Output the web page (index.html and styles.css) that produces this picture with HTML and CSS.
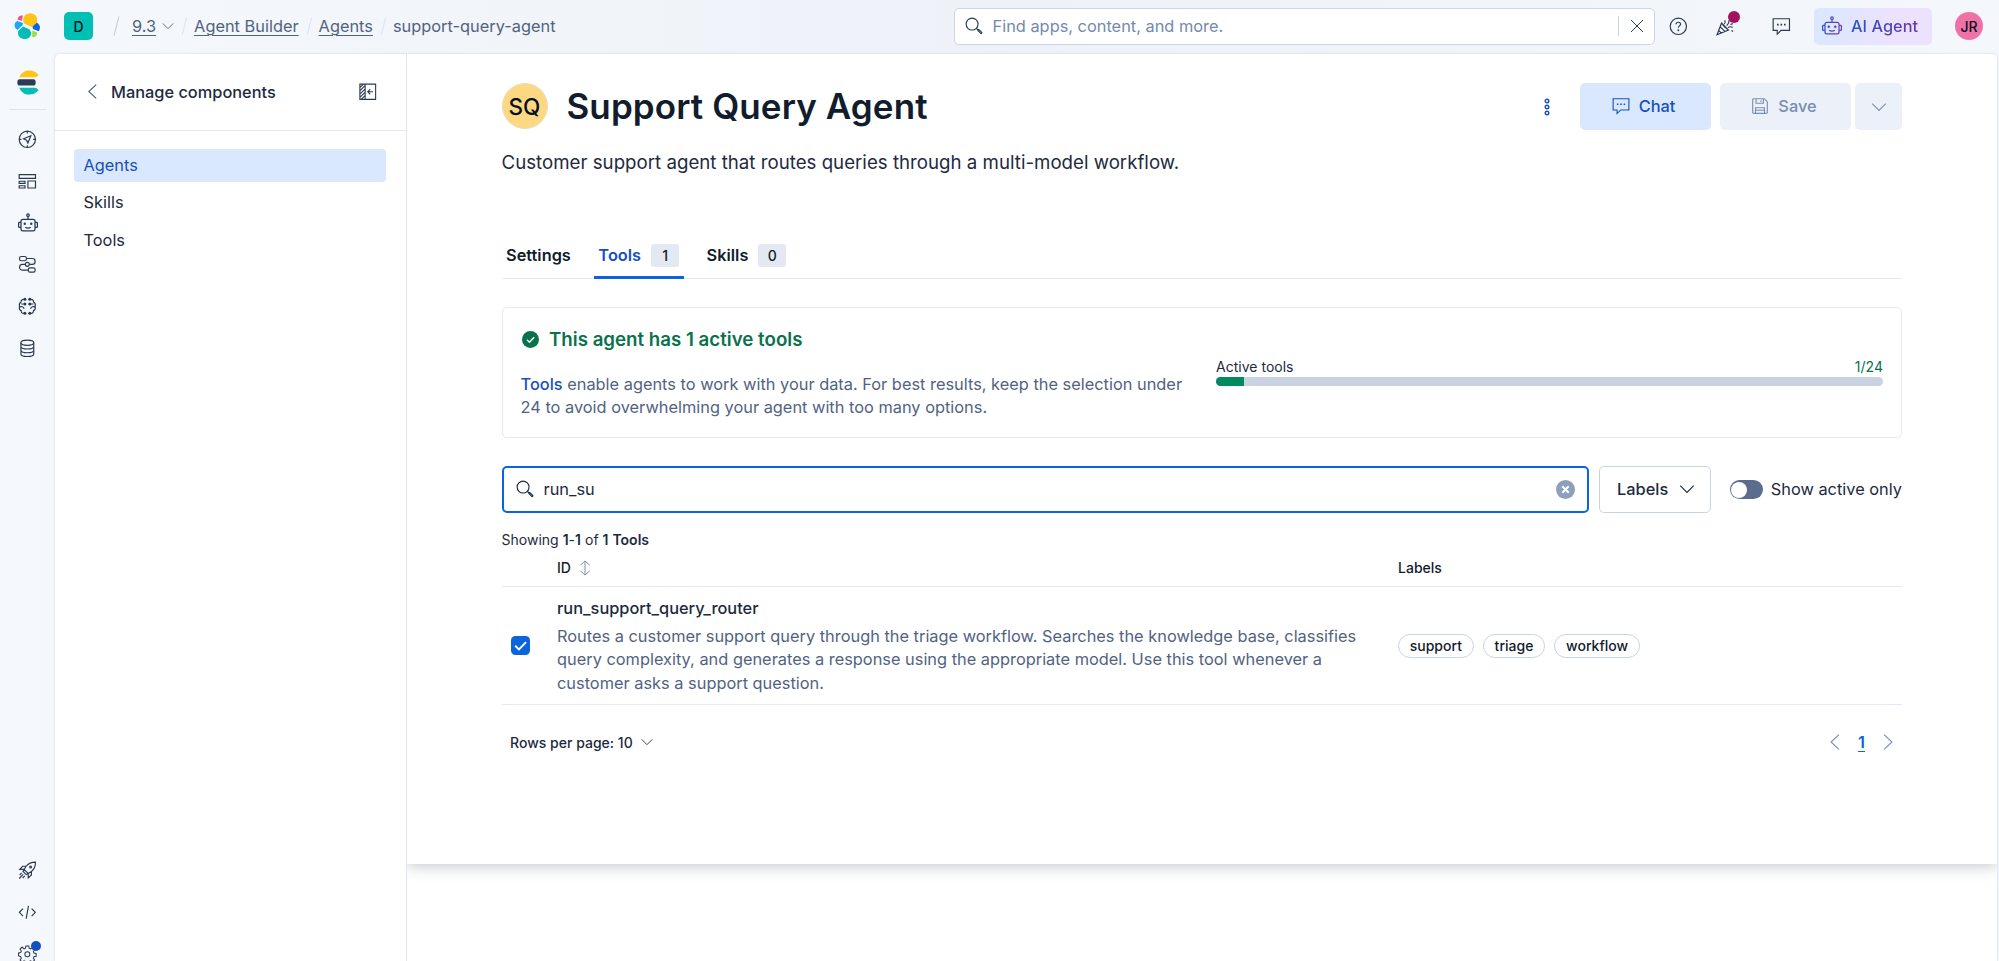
FILE: index.html
```html
<!DOCTYPE html>
<html lang="en">
<head>
<meta charset="utf-8">
<title>Agent Builder</title>
<link rel="stylesheet" href="styles.css">
</head>
<body>
<svg class="sprite" aria-hidden="true">
  <symbol id="down" viewBox="0 0 16 16"><path d="M2 5l6 6 6-6"/></symbol>
  <symbol id="left" viewBox="0 0 16 16"><path d="M11.5 1.5L4.5 8l7 6.5"/></symbol>
  <symbol id="right" viewBox="0 0 16 16"><path d="M4.5 1.5l7 6.5-7 6.5"/></symbol>
  <symbol id="search" viewBox="0 0 16 16"><circle cx="6.3" cy="6.3" r="5.3"/><path d="M10.2 10.2l1.3 1.1M11.3 11.9l.9-.8 2.7 2.6c.5.5-.4 1.4-.9.9z"/></symbol>
  <symbol id="chat" viewBox="0 0 16 16"><path d="M1 1.5h14v10H7.8L4.500 14.700V11.500H1z"/><path class="solid" d="M4.300 5.800h1.400v1.400H4.300zM7.300 5.800h1.400v1.400H7.300zM10.300 5.800h1.400v1.400h-1.400z"/></symbol>
  <symbol id="robot" viewBox="0 0 16 16"><rect x="2.400" y="5" width="11.200" height="9.300" rx="1.500"/><path d="M2.400 7.500H1A.5.5 0 0 0 .5 8v3a.5.500 0 0 0 .5.500h1.400M13.600 7.500H15a.5.500 0 0 1 .5.500v3a.5.500 0 0 1-.5.500h-1.400M8 5V2.800M5.800 11.300c1 1.100 3.400 1.100 4.400 0"/><circle cx="8" cy="1.700" r="1"/><circle class="solid" cx="5.400" cy="8.600" r="1"/><circle class="solid" cx="10.600" cy="8.600" r="1"/></symbol>
</svg>

<header class="header">
  <svg class="elastic" viewBox="0 0 26 26">
    <path fill="#fec514" d="M9.300 8.600C8.500 4 11.500.3 16 .3c5 0 8.300 4.300 7 8.900L17.800 14l-7.300-3.200z"/>
    <path fill="#f04e98" d="M3.600 6.500C3.900 3.600 6 2 8.900 2.600L7.700 8z"/>
    <path fill="#1ba9f5" d="M3.200 8l6 2.100-.9 2.500-4.800 4.400C-.3 15-.4 9.500 3.200 8z"/>
    <path fill="#02bcb7" d="M9.100 13.400l6.600 3 1.500 3.600c-.2 4-3.200 6-6.700 6-5 0-7.200-4-6.300-8z"/>
    <path fill="#0b64dd" d="M22.600 9.700c3.400 1.300 4.400 5.500 2.100 8.500L19 15.900l-.5-2.300z"/>
    <path fill="#93e23e" d="M18.300 17.600l4.800 1.900c.2 3.300-2 5.200-5 4.500z"/>
  </svg>
  <div class="space">D</div>
  <nav class="crumbs">
    <i class="slash big"></i><a class="u">9.3</a><svg class="ic c-down"><use href="#down"/></svg>
    <i class="slash s1"></i><a class="u">Agent Builder</a>
    <i class="slash"></i><a class="u">Agents</a>
    <i class="slash"></i><span>support-query-agent</span>
  </nav>
  <div class="finder">
    <svg class="ic i18"><use href="#search"/></svg>
    <span>Find apps, content, and more.</span>
    <div class="finder-x"><svg class="ic" viewBox="0 0 16 16"><path d="M2 2l12 12M14 2L2 14"/></svg></div>
  </div>
  <div class="actions">
    <svg class="ic" viewBox="0 0 16 16"><circle cx="8" cy="8" r="7"/><path d="M6.100 6.300C6.100 3.900 9.900 4 9.900 6.200 9.900 7.700 8 7.600 8 9.300"/><circle class="solid" cx="8" cy="11.400" r=".8"/></svg>
    <div class="news"><svg class="ic" viewBox="0 0 16 16"><path d="M4.800 5.200L.9 15.200l9.800-4zM3.600 8.400l4 4M2.300 11.500l2.300 2.300M4.800 5.200c1.500 3 3 4.500 5.900 6M7.200 6.200c1-1.200.8-2.300.3-3.400M9.200 7.400c1.500-1.600 2.200-3 2-4.600M10.300 9c1.300-.8 2.700-.8 4-.1M12.400 6.500l2-.8M13.300 11.600l1.400.8"/></svg><b></b></div>
    <svg class="ic" viewBox="0 0 16 16"><use href="#chat"/></svg>
  </div>
  <div class="ai">
    <svg class="ic ai-ic" viewBox="0 0 16 16"><defs><linearGradient id="aig" gradientUnits="userSpaceOnUse" x1="0" y1="0" x2="16" y2="0"><stop offset="0" stop-color="#3355c0"/><stop offset="1" stop-color="#6f3fae"/></linearGradient></defs><use href="#robot" stroke="url(#aig)"/></svg>
    <span>AI Agent</span>
  </div>
  <div class="user">JR</div>
</header>

<div class="body">
  <aside class="rail">
    <svg class="brand" viewBox="0 0 22 25"><path fill="#fec514" d="M2.200 7.200C4.200 2.800 7.500.4 12 .4c4 0 7.300 1.500 9.500 4.300-.8 1.600-2 2.500-4 2.500z"/><rect fill="#2b3a58" x=".4" y="9.200" width="18.200" height="6.400" rx="2.200"/><path fill="#02bcb7" d="M2.200 17.700h15.300c2 0 3.200.9 4 2.500-2.200 2.800-5.500 4.400-9.500 4.400-4.500 0-7.800-2.500-9.800-6.900z"/></svg>
    <hr>
    <svg class="ic" viewBox="0 0 16 16"><circle cx="8" cy="8" r="7"/><path d="M8 1v2M8 13v2M1 8h2M13 8h2M11 5L4.800 7.500l2.500 1.200 1.200 2.500z"/></svg>
    <svg class="ic" viewBox="0 0 16 16"><path d="M1 2.300h14v3.200H1zM8.500 7.700H15v6H8.500zM1 7.900h5v1.900H1zM1 11.800h5v1.900H1z"/></svg>
    <svg class="ic robot" viewBox="0 0 16 16"><use href="#robot"/></svg>
    <svg class="ic" viewBox="0 0 16 16"><rect x="1.300" y="1.300" width="5.900" height="3.600" rx="1.500"/><rect x="8.800" y="11.100" width="5.900" height="3.600" rx="1.500"/><circle cx="8" cy="8" r="1.700"/><path d="M7.200 3h5a2.500 2.500 0 0 1 0 5H9.700M6.300 8H3.800a2.500 2.500 0 0 0 0 5h5"/></svg>
    <svg class="ic" viewBox="0 0 16 16"><path d="M4.900 2C3.200 2 2.600 3.200 2.700 4.300 1.300 5 .9 6.500 1.300 8c-.4 1.500 0 3 1.400 3.700-.1 1.200.6 2.300 2.200 2.300M11.100 2c1.700 0 2.300 1.200 2.200 2.300C14.700 5 15.100 6.500 14.700 8c.4 1.500 0 3-1.400 3.700.1 1.200-.6 2.300-2.200 2.300M2.800 6h2.100M11.100 6h2.100M1.400 8.500c1.200-.6 3.600-.3 3.800 1.700M14.600 8.500c-1.200-.6-3.600-.3-3.800 1.700"/><circle class="solid" cx="5.900" cy="2" r="1.300"/><circle class="solid" cx="10.100" cy="2" r="1.300"/><circle class="solid" cx="5.900" cy="6" r="1.300"/><circle class="solid" cx="10.100" cy="6" r="1.300"/><circle class="solid" cx="5.900" cy="14" r="1.300"/><circle class="solid" cx="10.100" cy="14" r="1.300"/></svg>
    <svg class="ic" viewBox="0 0 16 16"><ellipse cx="8" cy="3.200" rx="5.500" ry="2.200"/><path d="M2.500 3.200v9.600c0 1.200 2.500 2.200 5.500 2.200s5.500-1 5.500-2.200V3.200M2.500 6.400c0 1.200 2.500 2.200 5.500 2.200s5.500-1 5.500-2.200M2.500 9.600c0 1.200 2.500 2.200 5.500 2.200s5.500-1 5.500-2.200"/></svg>
    <div class="rail-foot">
      <hr>
      <svg class="ic" viewBox="0 0 16 16"><path d="M15 1c-3.500 0-6 1-8 3.500L5.200 7.200l3.600 3.600 2.700-1.800C14 7 15 4.500 15 1zM7 4.500H4L1.500 7.200h3.700M11.500 9v3L8.800 14.500v-3.700M5.200 7.200L4.300 9l2.700 2.700 1.800-.9M3.200 10.200l-1.800 1.800M4.500 11.500L1 15M5.800 12.800L4 14.600"/><circle cx="10.800" cy="5.200" r=".8"/></svg>
      <svg class="ic" viewBox="0 0 16 16"><path d="M4.300 4.800L1.200 8l3.100 3.200M11.700 4.800L14.800 8l-3.100 3.200M9 2.500l-2 11"/></svg>
      <div class="gear"><svg class="ic" viewBox="0 0 18 18"><circle cx="9" cy="9" r="2.400"/><path d="M7.600 1h2.800l.4 2.100 1.400.6 1.800-1.200 2 2-1.200 1.800.6 1.400 2.100.4v2.800l-2.100.4-.6 1.400 1.200 1.800-2 2-1.800-1.200-1.400.6-.4 2.100H7.600l-.4-2.100-1.400-.6-1.800 1.200-2-2 1.200-1.800-.6-1.400L.5 10.400V7.600l2.100-.4.600-1.400L2 4l2-2 1.800 1.700 1.400-.6z"/></svg><b></b></div>
    </div>
  </aside>

  <div class="panel">
    <aside class="side">
      <div class="side-head">
        <svg class="ic back"><use href="#left"/></svg>
        <span>Manage components</span>
        <svg class="ic collapse" viewBox="0 0 16 16"><path d="M.8 1h14.400v14H.8zM5.600 1v14M1 4l3-3M1 7l4.500-4.500M1 10l4.500-4.500M1 13l4.500-4.500M2 15l3.500-3.500M12.800 8H8.300M10.300 5.700L8 8l2.300 2.300"/></svg>
      </div>
      <nav class="side-nav"><a class="on">Agents</a><a>Skills</a><a>Tools</a></nav>
    </aside>

    <main class="main">
      <section class="page">
        <div class="head">
          <div class="avatar">SQ</div>
          <h1>Support Query Agent</h1>
          <svg class="ic dots" viewBox="0 0 6 18"><circle cx="3" cy="3" r="1.800"/><circle cx="3" cy="9" r="1.800"/><circle cx="3" cy="15" r="1.800"/></svg>
          <div class="btn chat"><svg class="ic" viewBox="0 0 16 16"><use href="#chat"/></svg>Chat</div>
          <div class="btn save"><svg class="ic" viewBox="0 0 16 16"><path d="M1.500 2.500a1 1 0 0 1 1-1h9.300l2.700 2.700v9.300a1 1 0 0 1-1 1h-11a1 1 0 0 1-1-1zM4.500 1.500v4h6.500v-4M4 14.500v-5h8v5M4 11.800h8M8.800 3v1.500"/></svg>Save</div>
          <div class="btn more"><svg class="ic"><use href="#down"/></svg></div>
        </div>
        <p class="desc">Customer support agent that routes queries through a multi-model workflow.</p>
        <div class="tabs">
          <div class="tab">Settings</div>
          <div class="tab on">Tools<span>1</span></div>
          <div class="tab">Skills<span>0</span></div>
        </div>
        <div class="info">
          <div class="info-text">
            <h2><svg viewBox="0 0 17 17"><circle cx="8.500" cy="8.500" r="8.500" fill="#09724d"/><path d="M5 8.800l2.500 2.500 4.600-5" fill="none" stroke="#fff" stroke-width="1.400"/></svg>This agent has 1 active tools</h2>
            <p><b>Tools</b> enable agents to work with your data. For best results, keep the selection under<br>24 to avoid overwhelming your agent with too many options.</p>
          </div>
          <div class="meter">
            <div class="meter-top"><span>Active tools</span><em>1/24</em></div>
            <div class="bar"><i style="width:4.170%"></i></div>
          </div>
        </div>
        <div class="filters">
          <div class="field">
            <svg class="ic i18"><use href="#search"/></svg><span>run_su</span>
            <svg class="clear" viewBox="0 0 19 19"><circle cx="9.500" cy="9.500" r="9.500" fill="#8e9fbc"/><path d="M6.300 6.300l6.400 6.400M12.700 6.300l-6.400 6.400" stroke="#fff" stroke-width="2"/></svg>
          </div>
          <div class="labels">Labels<svg class="ic"><use href="#down"/></svg></div>
          <div class="toggle"><i></i></div>
          <span class="toggle-text">Show active only</span>
        </div>
        <div class="showing">Showing <b>1</b>-<b>1</b> of <b>1</b> <b>Tools</b></div>
        <div class="row thead">
          <div></div>
          <div class="th">ID<svg class="ic sort" viewBox="0 0 12 16"><path d="M6 1v14M1.500 5L6 1l4.500 4M1.500 11L6 15l4.500-4"/></svg></div>
          <div class="th">Labels</div>
        </div>
        <div class="row item">
          <div><svg class="check" viewBox="0 0 19 19"><rect width="19" height="19" rx="4.500" fill="#0b64dd"/><path d="M4.200 9.700l3.800 3.700 7-7.300" fill="none" stroke="#fff" stroke-width="2"/></svg></div>
          <div><div class="name">run_support_query_router</div>
            <p>Routes a customer support query through the triage workflow. Searches the knowledge base, classifies<br>query complexity, and generates a response using the appropriate model. Use this tool whenever a<br>customer asks a support question.</p></div>
          <div class="pills"><span>support</span><span>triage</span><span>workflow</span></div>
        </div>
        <div class="foot">
          <span>Rows per page: 10</span><svg class="ic rows-ic"><use href="#down"/></svg>
          <div class="pager"><svg class="ic"><use href="#left"/></svg><b>1</b><svg class="ic"><use href="#right"/></svg></div>
        </div>
      </section>
    </main>
  </div>
</div>
</body>
</html>
```
FILE: styles.css
```css
* { box-sizing: border-box; }
html, body { height: 100%; }
body {
  margin: 0; overflow: hidden; display: flex; flex-direction: column;
  font-family: Inter, "Liberation Sans", sans-serif; font-size: 16.33px; letter-spacing: .015px; color: #1d2a3e;
  background: linear-gradient(90deg, #f5f8fc 0, #eef1f7 50%, #f4f7fb 100%);
}
h1, h2, p { margin: 0; }
svg { display: block; flex: none; overflow: visible; }
.sprite { display: none; }
.ic { width: 18.67px; height: 18.67px; fill: none; stroke: currentColor; stroke-width: 1; }
.solid { fill: currentColor; stroke: none; }
.i18 { width: 18px; height: 18px; }

.header { height: 54px; flex: none; display: flex; align-items: center; padding: 0 16px 2px 14px; }
.elastic { width: 26px; height: 26px; }
.space {
  width: 29px; height: 28px; margin-left: 24px; border-radius: 5px; background: #00bfb3; color: #07101f;
  display: flex; align-items: center; justify-content: center; font-size: 14px; font-weight: 500;
}
.crumbs { display: flex; align-items: center; color: #516381; width: 461px; margin-left: 21px; }
.crumbs .u { text-decoration: underline; text-underline-offset: 3px; text-decoration-thickness: 1px; }
.slash { width: 1px; height: 18px; background: #dbe2ee; transform: rotate(14deg); margin: 0 9px 0 10px; }
.slash.big { height: 20px; margin: 0 15px 0 2px; background: #c0cbdc; }
.slash.s1 { margin-left: 9px; }
.c-down { width: 14px; height: 14px; margin-left: 5px; }
.finder {
  margin-left: auto; width: 701px; height: 37px; background: #fff; border: 1px solid #cad6e8; border-radius: 5px;
  display: flex; align-items: center; padding-left: 10px; color: #7489ad;
}
.finder .ic { color: #2a3a55; }
.finder span { margin-left: 10px; }
.finder-x { margin-left: auto; height: 20px; width: 36px; border-left: 1px solid #cad3e2; display: flex; align-items: center; padding-left: 10px; }
.finder-x .ic { width: 16px; height: 16px; }
.actions { display: flex; align-items: center; gap: 37.5px; margin-left: 14px; color: #2b394f; }
.actions > .ic:first-child { margin-right: -9px; }
.news { position: relative; }
.news b { position: absolute; left: 12px; top: -6px; width: 12px; height: 12px; border-radius: 50%; background: #a11262; }
.ai {
  margin-left: 23.500px; width: 118px; height: 37px; border-radius: 5px; display: flex; align-items: center; padding-left: 8px; gap: 9px;
  background: linear-gradient(90deg, #d9e8ff, #ece2fe 65%); font-weight: 500; color: #4a48b5;
}
.ai .ai-ic { width: 20px; height: 20px; color: #4f49b5; }
.ai span { background: linear-gradient(90deg, #2a55c4, #6e37a8); -webkit-background-clip: text; background-clip: text; color: transparent; }
.user { width: 28px; height: 28px; margin-left: 23px; border-radius: 50%; background: #ee72a6; color: #07101f; font-size: 14px; font-weight: 500; display: flex; align-items: center; justify-content: center; }

.body { flex: 1; min-height: 0; display: flex; }
.rail { width: 55px; flex: none; display: flex; flex-direction: column; align-items: center; color: #2b394f; padding-top: 16px; gap: 23.3px; }
.rail .robot { width: 20px; height: 20px; margin: -.7px 0; }
.brand { width: 22px; height: 25px; }
.rail hr { width: 37px; height: 1px; border: 0; margin: 0; background: #dfe5ef; }
.rail > hr { margin: -9px 0 -4px; }
.rail-foot { margin-top: auto; height: 118px; flex: none; display: flex; flex-direction: column; align-items: center; gap: 23.300px; }
.rail-foot hr { margin-bottom: -5px; }
.gear { position: relative; }
.gear b { position: absolute; left: 13px; top: -4.500px; width: 10px; height: 10px; border-radius: 50%; background: #1750ba; }

.panel { flex: 1; display: flex; margin-right: 2px; background: #fff; border-radius: 5px 5px 0 0; box-shadow: 0 0 3px #cfd7e2; overflow: hidden; }
.side { width: 351.500px; flex: none; border-right: 1px solid #dfe5f1; }
.side-head { height: 76.500px; border-bottom: 1px solid #e3e8f2; display: flex; align-items: center; padding: 0 29px; font-weight: 500; }
.side-head .back { width: 17px; height: 17px; color: #4a5974; }
.side-head span { margin-left: 10px; }
.collapse { width: 17.500px; height: 17.500px; margin-left: auto; color: #2b394f; }
.side-nav { padding: 18.500px 20px 0 19px; display: flex; flex-direction: column; gap: 4.700px; }
.side-nav a { height: 32.700px; line-height: 32.700px; padding-left: 9.500px; border-radius: 4px; }
.side-nav .on { background: #d9e8ff; color: #1750ba; }

.main { flex: 1; min-width: 0; overflow: hidden; }
.page { height: 810px; padding: 29px 95px 0; box-shadow: 0 2px 14px rgba(40, 50, 70, .28); background: #fff; }
.head { display: flex; align-items: center; height: 47px; }
.avatar { width: 46px; height: 46px; margin-top: -1px; border-radius: 50%; background: #fcd883; border: 1px solid #e8dcc0; color: #07101f; font-weight: 500; font-size: 22.500px; display: flex; align-items: center; justify-content: center; }
h1 { margin: -2px 0 0 19px; font-size: 35px; line-height: 40px; font-weight: 600; color: #111c2c; letter-spacing: .1px; }
.dots { width: 6px; height: 18px; margin-left: auto; margin-right: 30px; color: #1750ba; stroke-width: 1.400; }
.btn { height: 47px; width: 131px; border-radius: 5px; display: flex; align-items: center; justify-content: center; gap: 9px; padding: 0 3px 2px 0; font-weight: 500; }
.btn .ic { width: 18px; height: 18px; }
.btn.chat { background: #d9e8ff; color: #1750ba; }
.btn.save, .btn.more { background: #ecf1f9; color: #798eaf; margin-left: 9.500px; }
.btn.more { width: 47px; margin-left: 4px; padding: 0; }
.desc { margin-top: 18.500px; font-size: 18.670px; line-height: 28px; color: #1d2a3e; }
.tabs { margin-top: 55px; height: 47.500px; border-bottom: 1px solid #e3e8f2; display: flex; gap: 18.500px; font-weight: 600; }
.tab { height: 47px; padding: 0 4.500px; display: flex; align-items: center; color: #111c2c; }
.tab.on { color: #1750ba; border-bottom: 3px solid #0b64dd; padding-top: 3px; }
.tab span { width: 28px; height: 23px; margin-left: 10px; border-radius: 3px; background: #e3e8f2; color: #111c2c; font-size: 14px; font-weight: 500; display: flex; align-items: center; justify-content: center; }
.info { margin-top: 28px; height: 131px; border: 1px solid #e3e8f2; border-radius: 5px; padding: 17px 18px; display: flex; }
.info-text { width: 695.500px; flex: none; white-space: nowrap; }
h2 { display: flex; align-items: center; gap: 10.500px; height: 28px; font-size: 18.670px; font-weight: 600; color: #09724d; }
h2 svg { width: 17px; height: 17px; margin-left: 1px; }
.info p, .item p { line-height: 23.330px; color: #516381; }
.info p { margin-top: 19.500px; }
.info p b { color: #1750ba; font-weight: 500; }
.meter { flex: 1; padding-top: 31.500px; font-size: 14px; }
.meter-top { display: flex; justify-content: space-between; line-height: 20px; }
em { font-style: normal; color: #09724d; }
.bar { height: 9.500px; border-radius: 5px; background: #cad3e2; overflow: hidden; }
.bar i { display: block; height: 100%; background: #008a5e; }
.filters { margin-top: 28px; height: 47px; display: flex; align-items: center; }
.field { width: 1087.500px; height: 47px; border: 2px solid #0b64dd; border-radius: 5px; display: flex; align-items: center; padding: 0 12px 1px; }
.field span { margin-left: 10px; }
.clear { width: 19px; height: 19px; margin-left: auto; }
.labels { width: 112.500px; height: 47px; margin-left: 9.500px; border: 1px solid #cad3e2; border-radius: 5px; display: flex; align-items: center; padding: 0 0 1px 17.500px; gap: 9.500px; font-weight: 500; }
.labels .ic { width: 18px; height: 18px; }
.toggle { width: 33px; height: 19px; margin-left: 18.500px; border-radius: 10px; background: #5a6d8c; padding: 1.500px; }
.toggle i { display: block; width: 16px; height: 16px; border-radius: 50%; background: #fff; }
.toggle-text { margin: -1px 0 0 auto; }
.showing { margin-top: 17px; line-height: 20px; height: 21px; font-size: 14px; }
.showing b { font-weight: 600; }
.row { display: grid; grid-template-columns: 55.500px 841px 1fr; border-bottom: 1px solid #e3e8f2; }
.thead { height: 36px; }
.th { display: flex; align-items: center; font-size: 14px; font-weight: 500; height: 33px; gap: 8px; color: #111c2c; }
.sort { width: 12px; height: 16px; color: #798eaf; }
.item { height: 118px; align-items: center; }
.item > div:nth-child(2) { margin-top: 1px; }
.check { width: 19px; height: 19px; margin-left: 9px; }
.name { font-weight: 500; line-height: 23.330px; margin-bottom: 4.500px; }
.pills { display: flex; gap: 9.300px; }
.pills span { height: 24px; border: 1px solid #cad3e2; border-radius: 12px; padding: 0 10.700px; font-size: 14px; line-height: 22px; font-weight: 500; color: #111c2c; }
.foot { height: 75px; display: flex; align-items: center; padding: 0 5px 1px 8.500px; font-size: 14px; font-weight: 500; }
.rows-ic { width: 14px; height: 14px; margin-left: 7px; }
.pager { margin-left: auto; display: flex; align-items: center; gap: 14px; color: #798eaf; }
.pager .ic { width: 18px; height: 18px; }
.pager b { font-size: 16.330px; font-weight: 600; color: #0b64dd; text-decoration: underline; text-underline-offset: 3px; }
```
